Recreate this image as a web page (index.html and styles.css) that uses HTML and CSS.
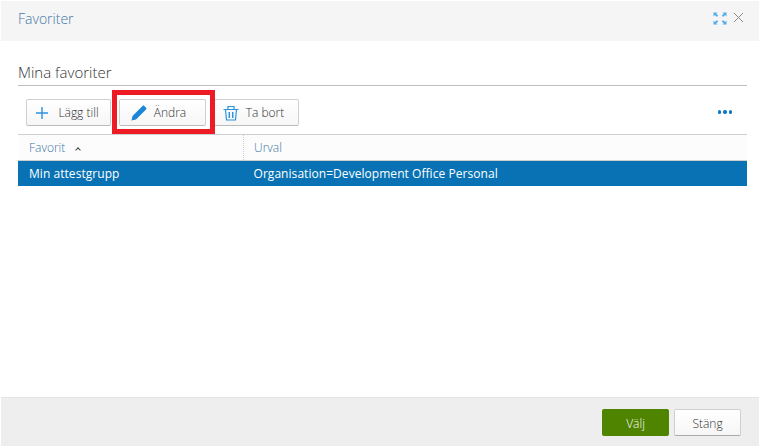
FILE: index.html
```html
<!DOCTYPE html>
<html lang="sv">
<head>
    <meta charset="UTF-8">
    <meta name="viewport" content="width=device-width, initial-scale=1.0">
    <title>Favoriter</title>
    <link rel="stylesheet" href="styles.css">
</head>
<body>
    <div class="dialog">
        <div class="dialog-header">
            <span class="dialog-title">Favoriter</span>
            <div class="header-icons">
                <svg class="icon-expand" width="14" height="13" viewBox="0 0 14 13">
                    <path d="M0.500 0.500h4L3.300 1.700 5.200 3.600 3.900 4.900 2 3 0.500 4.500zM13.500 0.500v4L12 3 10.100 4.900 8.800 3.600l1.900-1.900L9.500 0.500zM0.500 12.500v-4L2 10l1.900-1.900 1.300 1.300-1.900 1.900 1.200 1.200zM13.500 12.500h-4l1.200-1.200-1.900-1.900 1.300-1.300L12 10l1.500-1.500z" fill="#55ade8"/>
                </svg>
                <svg class="icon-close" width="11" height="11" viewBox="0 0 11 11">
                    <path d="M1 1l9 9M10 1l-9 9" stroke="#8c8c8c" stroke-width="1" fill="none"/>
                </svg>
            </div>
        </div>

        <div class="dialog-body">
            <h2 class="section-title">Mina favoriter</h2>

            <div class="toolbar">
                <button class="tool-btn btn-add">
                    <svg width="12" height="12" viewBox="0 0 12 12">
                        <path d="M6 0v12M0 6h12" stroke="#2b93dc" stroke-width="1.400" fill="none"/>
                    </svg>
                    Lägg till
                </button>
                <button class="tool-btn btn-edit">
                    <svg width="16" height="16" viewBox="0 0 16 16">
                        <path d="M0.500 15.500l1-4.500L11.500 1c.6-.6 1.300-.6 1.800-.1l1.800 1.800c.5.5.5 1.200-.1 1.800L5 14.500z" fill="#1b87d6"/>
                    </svg>
                    Ändra
                </button>
                <button class="tool-btn btn-delete">
                    <svg width="16" height="16" viewBox="0 0 16 16">
                        <path d="M0.500 4.500h15M5 4.500V1.500h6v3M2.500 4.500l1 10.500h9l1-10.500" stroke="#2b93dc" stroke-width="1.200" fill="none"/>
                        <path d="M6.300 7v6M9.700 7v6" stroke="#2b93dc" stroke-width="1.500" fill="none"/>
                    </svg>
                    Ta bort
                </button>
                <div class="more-dots">
                    <span></span><span></span><span></span>
                </div>
                <div class="highlight-box"></div>
            </div>

            <table class="fav-table">
                <thead>
                    <tr>
                        <th class="col-name">Favorit <span class="sort-arrow"></span></th>
                        <th>Urval</th>
                    </tr>
                </thead>
                <tbody>
                    <tr class="selected">
                        <td>Min attestgrupp</td>
                        <td>Organisation=Development Office Personal</td>
                    </tr>
                </tbody>
            </table>
        </div>

        <div class="dialog-footer">
            <button class="footer-btn btn-primary">Välj</button>
            <button class="footer-btn">Stäng</button>
        </div>
    </div>
</body>
</html>
```

FILE: styles.css
```css
html, body {
    height: 100%;
}
body {
    margin: 0;
    font-family: "Open Sans", sans-serif;
    font-size: 12px;
    font-weight: 300;
    color: #444;
    background-color: white;
}
.dialog {
    height: 100%;
    box-sizing: border-box;
    padding: 1px 1px 0 1px;
    display: flex;
    flex-direction: column;
}
.dialog-header {
    height: 40px;
    flex-shrink: 0;
    background-color: #f5f5f5;
    display: flex;
    align-items: center;
    justify-content: space-between;
    padding: 0 15px 6px 17px;
    box-sizing: border-box;
}
.dialog-title {
    font-size: 14px;
    color: #3f78a6;
}
.header-icons {
    display: flex;
    align-items: flex-start;
    gap: 6px;
}
.icon-expand, .icon-close {
    display: block;
}
.dialog-body {
    flex: 1;
    padding: 22px 12px 0 17px;
}
.section-title {
    margin: 0;
    height: 22px;
    font-size: 15px;
    font-weight: 300;
    line-height: 18px;
    color: #333;
    border-bottom: 1px solid #bdbdbd;
}
.toolbar {
    position: relative;
    display: flex;
    align-items: flex-start;
    gap: 8px;
    height: 48px;
    padding: 13px 8px 0;
    box-sizing: border-box;
}
.tool-btn {
    height: 27px;
    display: flex;
    align-items: center;
    justify-content: center;
    gap: 7px;
    padding: 0;
    font-family: inherit;
    font-size: 12px;
    font-weight: 300;
    color: #333;
    background: linear-gradient(#fff, #f6f6f6);
    border: 1px solid #d0d0d0;
    border-bottom-color: #bbb;
    border-radius: 2px;
}
.btn-add {
    width: 85px;
    gap: 10px;
    padding-right: 2px;
}
.btn-edit {
    width: 87px;
    padding-right: 8px;
}
.btn-delete {
    width: 85px;
    padding-right: 6px;
}
.more-dots {
    margin: 11px 7px 0 auto;
    display: flex;
    gap: 2px;
}
.more-dots span {
    width: 3.500px;
    height: 3.500px;
    border-radius: 50%;
    background-color: #0a78c8;
}
.highlight-box {
    position: absolute;
    left: 94px;
    top: 4px;
    width: 93px;
    height: 34px;
    border: 5px solid #ed1c24;
}
.fav-table {
    width: 100%;
    border-collapse: collapse;
    table-layout: fixed;
}
.fav-table th {
    height: 25px;
    padding: 0 11px;
    text-align: left;
    font-weight: 300;
    color: #3f78a6;
    background-color: #fcfcfc;
    border-top: 1px solid #cfcfcf;
    border-bottom: 1px solid #cfcfcf;
}
.fav-table th.col-name {
    width: 203px;
    border-right: 1px dotted #cfcfcf;
}
.fav-table th:last-child {
    padding-left: 10px;
}
.sort-arrow {
    display: inline-block;
    width: 3px;
    height: 3px;
    margin-left: 8px;
    border-top: 1px solid #444;
    border-left: 1px solid #444;
    transform: rotate(45deg);
}
.fav-table td {
    height: 25px;
    padding: 0 11px;
    font-weight: 400;
    letter-spacing: 0.05px;
    color: white;
}
.fav-table td:last-child {
    padding-left: 10px;
}
.selected {
    background-color: #0872b4;
}
.dialog-footer {
    height: 49px;
    flex-shrink: 0;
    box-sizing: border-box;
    background-color: #eeeeee;
    border-top: 1px solid #e4e4e4;
    display: flex;
    align-items: center;
    justify-content: flex-end;
    gap: 5px;
    padding: 0 18px 0 0;
}
.footer-btn {
    width: 67px;
    height: 27px;
    padding: 3px 0 0;
    font-family: inherit;
    font-size: 12px;
    font-weight: 300;
    color: #333;
    background: linear-gradient(#fff, #f6f6f6);
    border: 1px solid #d0d0d0;
    border-bottom-color: #aaa;
    border-radius: 2px;
}
.btn-primary {
    color: white;
    background: #4f8400;
    border: none;
}
```
